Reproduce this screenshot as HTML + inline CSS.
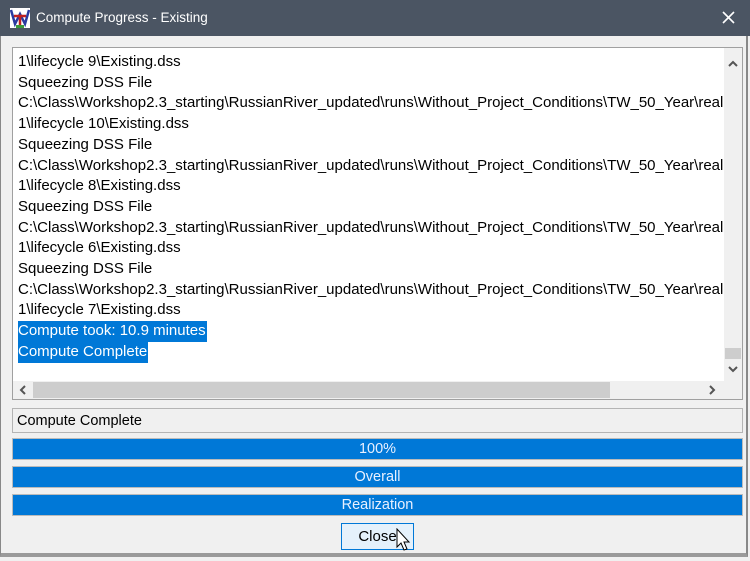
<!DOCTYPE html>
<html><head><style>
body{margin:0;width:750px;height:561px;overflow:hidden;background:#f0f0f0;font-family:"Liberation Sans",Arial,sans-serif;position:relative}
.tb{position:absolute;left:0;top:0;width:750px;height:36px;background:#4b5563;color:#fff;font-size:13.5px}
.tb .t{position:absolute;left:36px;top:10px}
.frame{position:absolute;left:0;top:36px;width:748px;height:521px;border-left:1px solid #888;border-right:2px solid #888;border-bottom:4px solid #9a9a9a;box-sizing:border-box}
.ta{position:absolute;left:12px;top:47px;width:731px;height:353px;border:1px solid #a0a0a0;box-sizing:border-box;background:#fff;overflow:hidden}
.txt{position:absolute;left:5px;top:4px;font-size:15px;line-height:20.7px;color:#000;white-space:nowrap}
.sel{background:#0078d7;color:#fff;display:inline-block;line-height:20.7px;padding-right:1px}
.vs{position:absolute;right:0;top:0;width:18px;height:333px;background:#f0f0f0}
.hs{position:absolute;left:0;bottom:0;width:729px;height:18px;background:#f0f0f0}
.fld{position:absolute;left:12px;top:408px;width:731px;height:25px;border:1px solid #b4b4b4;box-sizing:border-box;font-size:14.5px;padding:4px 4px;}
.pb{position:absolute;left:12px;width:731px;height:22px;background:#0078d7;border:1px solid #bbb;box-sizing:border-box;color:#e8f0ff;text-align:center;font-size:14.5px;line-height:20px}
.btn{position:absolute;left:341px;top:523px;width:73px;height:27px;border:1px solid #0078d7;box-sizing:border-box;background:#e5f1fb;font-size:15px;text-align:center;line-height:25px}
</style></head><body>
<div class="tb">
<svg style="position:absolute;left:10px;top:8px" width="20" height="20"><rect width="20" height="20" fill="#fff"/><path d="M1 2 L5 16 L10 6 L15 16 L19 2" stroke="#2a3aa0" stroke-width="2.5" fill="none"/><path d="M4 8 H16 M10 8 V19" stroke="#c02020" stroke-width="2.5"/><rect x="6" y="17" width="8" height="3" fill="#3a9a3a"/></svg>
<span class="t">Compute Progress - Existing</span>
<svg style="position:absolute;left:722px;top:11px" width="13" height="13"><path d="M1 1 L12 12 M12 1 L1 12" stroke="#fff" stroke-width="1.6"/></svg></div>
<div class="frame"></div>
<div class="ta">
<div class="txt">1\lifecycle 9\Existing.dss<br>Squeezing DSS File<br>C:\Class\Workshop2.3_starting\RussianRiver_updated\runs\Without_Project_Conditions\TW_50_Year\realization<br>1\lifecycle 10\Existing.dss<br>Squeezing DSS File<br>C:\Class\Workshop2.3_starting\RussianRiver_updated\runs\Without_Project_Conditions\TW_50_Year\realization<br>1\lifecycle 8\Existing.dss<br>Squeezing DSS File<br>C:\Class\Workshop2.3_starting\RussianRiver_updated\runs\Without_Project_Conditions\TW_50_Year\realization<br>1\lifecycle 6\Existing.dss<br>Squeezing DSS File<br>C:\Class\Workshop2.3_starting\RussianRiver_updated\runs\Without_Project_Conditions\TW_50_Year\realization<br>1\lifecycle 7\Existing.dss<br><span class="sel">Compute took: 10.9 minutes</span><br><span class="sel">Compute Complete</span></div>
<div class="vs"><svg style="position:absolute;left:4px;top:12px" width="10" height="7"><path d="M1 6 L5 2 L9 6" stroke="#555" stroke-width="2" fill="none"/></svg><div style="position:absolute;left:1px;top:300px;width:16px;height:11px;background:#cdcdcd"></div><svg style="position:absolute;left:4px;top:318px" width="10" height="7"><path d="M1 1 L5 5 L9 1" stroke="#555" stroke-width="2" fill="none"/></svg></div>
<div class="hs"><svg style="position:absolute;left:6px;top:4px" width="7" height="10"><path d="M6 1 L2 5 L6 9" stroke="#555" stroke-width="2" fill="none"/></svg><div style="position:absolute;left:20px;top:1px;width:577px;height:16px;background:#cdcdcd"></div><svg style="position:absolute;left:696px;top:4px" width="7" height="10"><path d="M1 1 L5 5 L1 9" stroke="#555" stroke-width="2" fill="none"/></svg></div>
</div>
<div class="fld">Compute Complete</div>
<div class="pb" style="top:438px">100%</div>
<div class="pb" style="top:466px">Overall</div>
<div class="pb" style="top:494px">Realization</div>
<div class="btn">Close</div>
<svg style="position:absolute;left:396px;top:528px" width="18" height="26"><path d="M1 1 V19 L5 15 L8 22 L11 21 L8 14 L13 14 Z" fill="#fff" stroke="#000" stroke-width="1"/></svg>
</body></html>
